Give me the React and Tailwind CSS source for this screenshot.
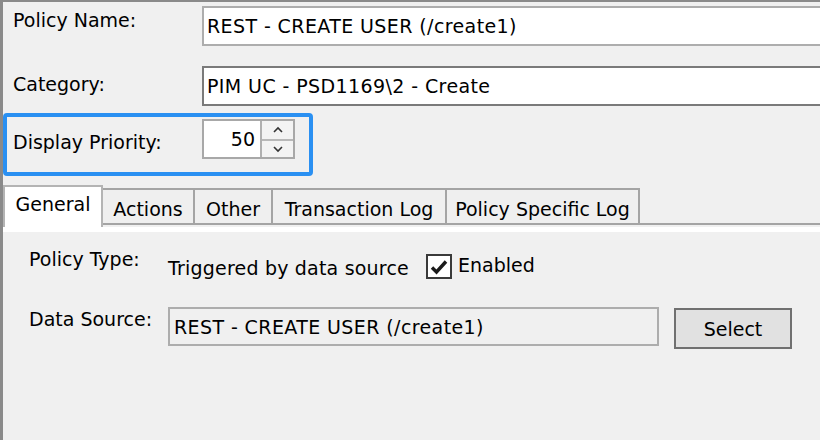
import React from "react";

function Chevron({ up }) {
  return (
    <svg width="12" height="8" viewBox="0 0 12 8" className="block">
      <path
        d={up ? "M2 6 L6 2 L10 6" : "M2 2 L6 6 L10 2"}
        fill="none"
        stroke="#333"
        strokeWidth="1.6"
      />
    </svg>
  );
}

function Tab({ label, width, selected }) {
  if (selected) {
    return (
      <div
        className={`${width} h-[42px] -mb-[2px] bg-white border-t-2 border-l-2 border-r-2 border-[#b4b4b4] flex justify-center pt-[5px] shrink-0 relative z-10`}
      >
        <span>{label}</span>
      </div>
    );
  }
  return (
    <div
      className={`${width} h-[35px] border-t-2 border-r-2 border-[#a4a4a4] bg-[#efefef] flex justify-center pt-[7px] shrink-0`}
    >
      <span>{label}</span>
    </div>
  );
}

export default function App() {
  return (
    <div className="w-[820px] h-[440px] overflow-hidden bg-[#f0f0f0] border-t-2 border-l-[3px] border-[#8a8a8a] font-['DejaVu_Sans',sans-serif] text-[19px] leading-[24px] text-black whitespace-nowrap">
      {/* Policy Name */}
      <div className="flex items-start mt-[4px] h-[40px]">
        <div className="w-[199px] pl-[10px] mt-[2px] shrink-0">Policy Name:</div>
        <div className="w-[640px] h-[40px] shrink-0 border-2 border-[#adadad] bg-white flex items-center pl-[3px] tracking-[0.4px]">
          REST - CREATE USER (/create1)
        </div>
      </div>

      {/* Category */}
      <div className="flex items-start mt-[20px] h-[40px]">
        <div className="w-[199px] pl-[10px] mt-[6px] shrink-0">Category:</div>
        <div className="w-[640px] h-[40px] shrink-0 border-2 border-[#7a7a7a] bg-white flex items-center pl-[3px] tracking-[0.4px]">
          PIM UC - PSD1169\2 - Create
        </div>
      </div>

      {/* Display Priority (highlighted) */}
      <div className="mt-[7px] w-[310px] h-[63px] border-4 border-[#2a90f2] rounded-[4px] flex items-start">
        <div className="w-[195px] pl-[6px] pt-[13px] shrink-0">Display Priority:</div>
        <div className="mt-[2px] w-[93px] h-[40px] border-2 border-[#a8a8a8] flex shrink-0">
          <div className="w-[56px] bg-white flex items-center justify-end pr-[5px]">50</div>
          <div className="flex-1 flex flex-col border-l-2 border-[#b0b0b0] bg-[#f3f3f3]">
            <div className="h-[18px] flex items-center justify-center">
              <Chevron up />
            </div>
            <div className="flex-1 border-t-2 border-[#b8b8b8] flex items-center justify-center">
              <Chevron />
            </div>
          </div>
        </div>
      </div>

      {/* Tabs */}
      <div className="mt-[9px] h-[40px] flex items-start border-b-2 border-[#a4a4a4]">
        <Tab label="General" width="w-[100px]" selected />
        <div className="mt-[3px] flex">
          <Tab label="Actions" width="w-[92px]" />
          <Tab label="Other" width="w-[78px]" />
          <Tab label="Transaction Log" width="w-[174px]" />
          <Tab label="Policy Specific Log" width="w-[193px]" />
        </div>
      </div>

      {/* Tab page */}
      <div className="mt-[2px] border-t-[5px] border-white pl-[26px]">
        <div className="flex items-start mt-[15px] h-[32px]">
          <div className="w-[139px] shrink-0">Policy Type:</div>
          <div className="w-[258px] shrink-0 mt-[9px] tracking-[0.2px]">Triggered by data source</div>
          <div className="mt-[7px] w-[26px] h-[25px] border-2 border-[#3a3a3a] bg-white flex items-center justify-center shrink-0">
            <svg width="20" height="18" viewBox="0 0 20 18">
              <path d="M3 9.5 L7.5 14 L17 3.5" fill="none" stroke="#1a1a1a" strokeWidth="3.4" />
            </svg>
          </div>
          <div className="ml-[6px] mt-[6px]">Enabled</div>
        </div>

        <div className="flex items-start mt-[28px]">
          <div className="w-[139px] shrink-0">Data Source:</div>
          <div className="w-[491px] h-[39px] shrink-0 border-2 border-[#adadad] bg-[#f0f0f0] flex items-center pl-[4px] tracking-[0.4px]">
            REST - CREATE USER (/create1)
          </div>
          <div className="ml-[15px] mt-[1px] w-[118px] h-[41px] border-2 border-[#707070] bg-[#e1e1e1] flex items-center justify-center shrink-0">
            Select
          </div>
        </div>
      </div>
    </div>
  );
}
